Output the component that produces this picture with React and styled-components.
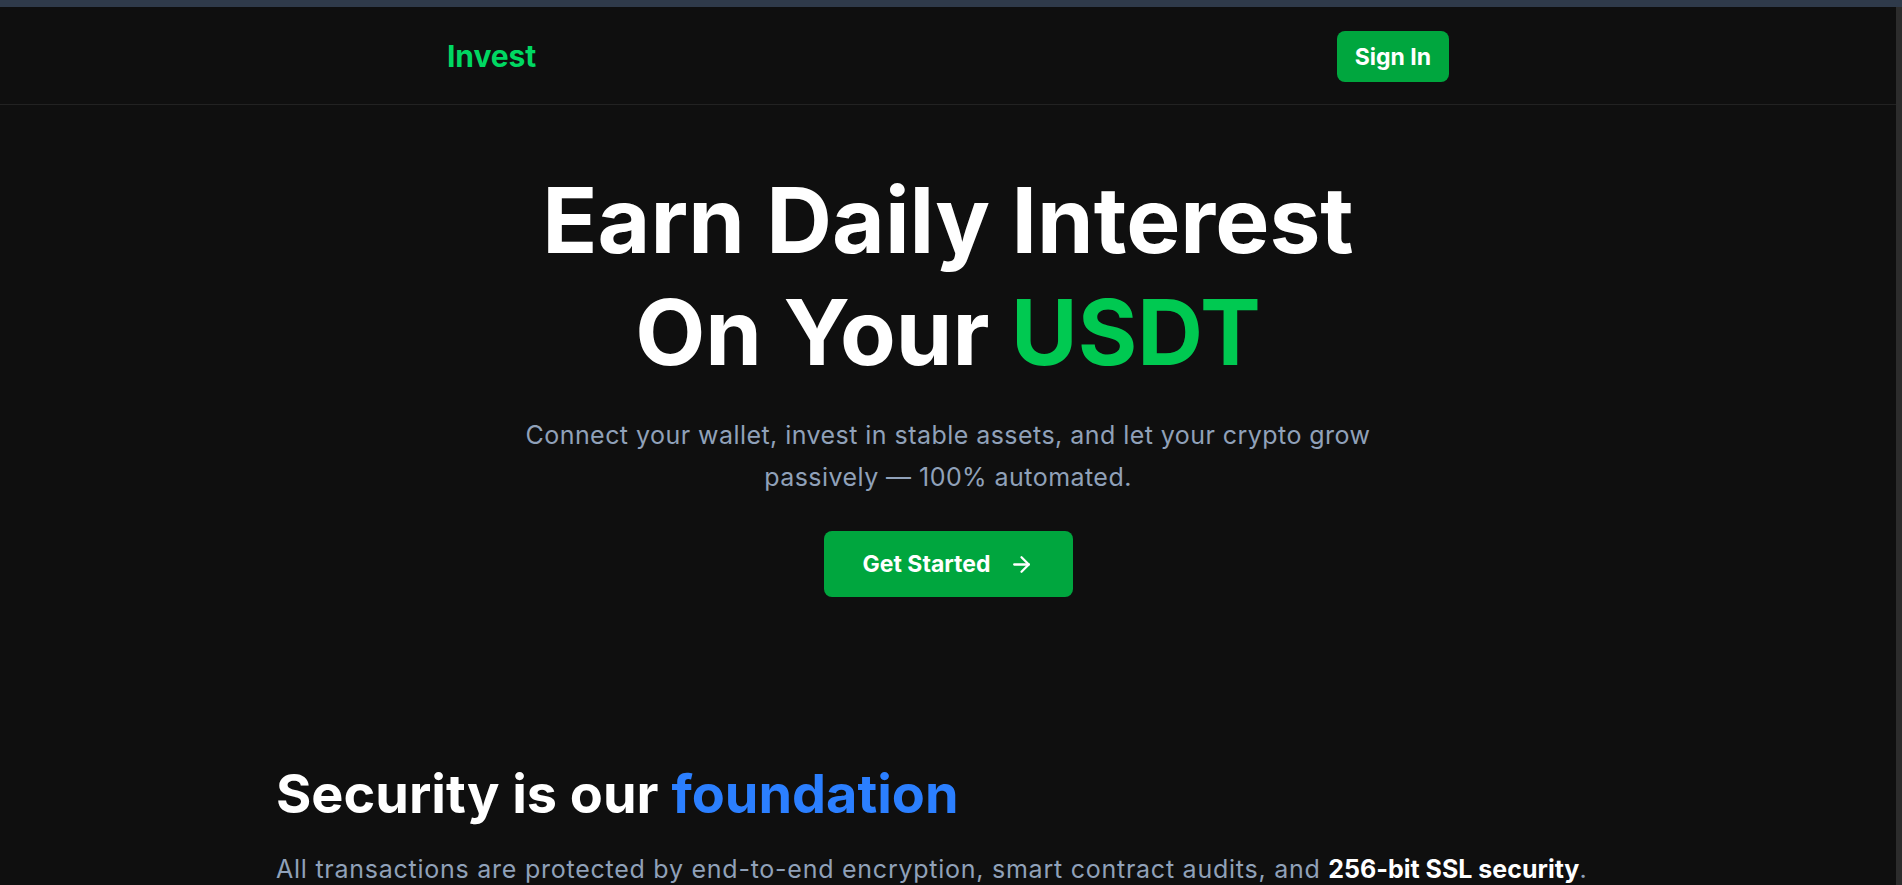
import React from "react";
import styled, { createGlobalStyle } from "styled-components";
import { ArrowRight } from "lucide-react";

const GlobalStyle = createGlobalStyle`
  html, body {
    margin: 0;
    padding: 0;
    height: 100%;
    overflow: hidden;
    background: #0f0f0f;
  }
  body {
    font-family: Inter, "Noto Sans", "Liberation Sans", sans-serif;
    color: #ffffff;
  }
  * {
    box-sizing: border-box;
  }
`;

export default function App() {
  return (
    <>
      <GlobalStyle />
      <Frame>
        <TopBar />
        <Body>
          <Page>
            <Nav>
              <NavInner>
                <Logo>Invest</Logo>
                <SignIn>Sign In</SignIn>
              </NavInner>
            </Nav>

            <Hero>
              <Headline>
                Earn Daily Interest
                <br />
                On Your <Accent $color="#00c951">USDT</Accent>
              </Headline>
              <Lead>
                Connect your wallet, invest in stable assets, and let your crypto
                grow passively — 100% automated.
              </Lead>
              <Cta>
                Get Started
                <ArrowRight size={25} strokeWidth={2.2} />
              </Cta>
            </Hero>

            <Security>
              <SectionTitle>
                Security is our <Accent $color="#2b7fff">foundation</Accent>
              </SectionTitle>
              <SectionText>
                All transactions are protected by end-to-end encryption, smart
                contract audits, and <strong>256-bit SSL security</strong>.
              </SectionText>
            </Security>
          </Page>
          <ScrollStrip />
        </Body>
      </Frame>
    </>
  );
}

const Frame = styled.div`
  height: 100vh;
  display: flex;
  flex-direction: column;
`;

const TopBar = styled.div`
  height: 7px;
  flex-shrink: 0;
  background: #2f3a4a;
`;

const Body = styled.div`
  flex: 1;
  display: flex;
  min-height: 0;
`;

const Page = styled.main`
  flex: 1;
  background: #0f0f0f;
  overflow: hidden;
`;

const ScrollStrip = styled.div`
  width: 6px;
  flex-shrink: 0;
  background: #2c2c2c;
`;

const Nav = styled.header`
  height: 98px;
  border-bottom: 1px solid #222222;
  display: flex;
  align-items: center;
`;

const NavInner = styled.div`
  width: 1002px;
  margin: 0 auto;
  display: flex;
  justify-content: space-between;
  align-items: center;
`;

const Logo = styled.div`
  font-size: 30px;
  font-weight: 700;
  color: #00d862;
  letter-spacing: -0.1px;
`;

const SignIn = styled.button`
  font-family: inherit;
  font-size: 23px;
  font-weight: 700;
  color: #ffffff;
  background: #00a63e;
  border: none;
  border-radius: 8px;
  padding: 0 18px;
  height: 51px;
  margin-top: 2px;
  cursor: pointer;
`;

const Hero = styled.section`
  display: flex;
  flex-direction: column;
  align-items: center;
  text-align: center;
  padding-top: 59px;
`;

const Headline = styled.h1`
  margin: 0;
  font-size: 91px;
  line-height: 112px;
  font-weight: 700;
  letter-spacing: 0;
`;

const Accent = styled.span`
  color: ${(p) => p.$color};
`;

const Lead = styled.p`
  margin: 26px 0 0;
  max-width: 880px;
  font-size: 25px;
  line-height: 42px;
  letter-spacing: 0.45px;
  color: #90a1b9;
`;

const Cta = styled.button`
  margin-top: 33px;
  height: 66px;
  width: 249px;
  display: flex;
  align-items: center;
  justify-content: center;
  gap: 18px;
  font-family: inherit;
  font-size: 23px;
  font-weight: 700;
  color: #ffffff;
  background: #00a63e;
  border: none;
  border-radius: 8px;
  cursor: pointer;
`;

const Security = styled.section`
  width: 1344px;
  margin: 164px auto 0;
`;

const SectionTitle = styled.h2`
  margin: 0;
  font-size: 54px;
  line-height: 66px;
  font-weight: 700;
`;

const SectionText = styled.p`
  margin: 24px 0 0;
  font-size: 25px;
  line-height: 36px;
  letter-spacing: 0.75px;
  color: #90a1b9;

  strong {
    color: #ffffff;
    font-weight: 700;
    letter-spacing: 0;
  }
`;
